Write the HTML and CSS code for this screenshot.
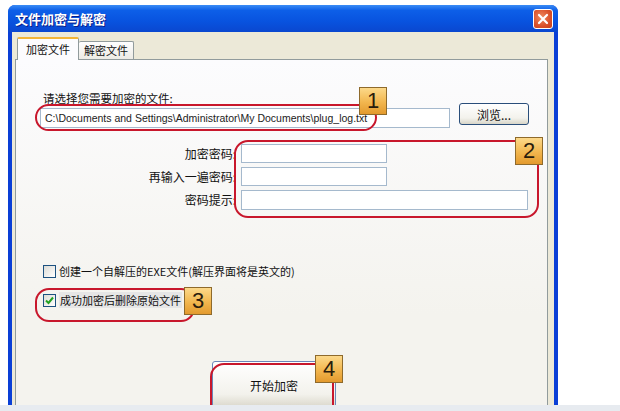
FILE: index.html
```html
<!DOCTYPE html>
<html lang="zh-CN">
<head>
  <meta charset="UTF-8">
  <title>文件加密与解密</title>
  <link rel="stylesheet" href="styles.css">
</head>
<body>
  <div class="screen">
    <div class="window">
      <div class="titlebar">
        <span class="title">文件加密与解密</span>
        <span class="close">
          <svg width="12" height="12" viewBox="0 0 12 12"><path d="M2 2 L10 10 M10 2 L2 10" stroke="#fff" stroke-width="2.2" stroke-linecap="round"/></svg>
        </span>
      </div>
      <div class="client">
        <div class="tabs">
          <div class="tab active">加密文件</div>
          <div class="tab">解密文件</div>
        </div>
        <div class="panel">
          <div class="file-label">请选择您需要加密的文件:</div>
          <div class="file-row">
            <div class="field path">C:\Documents and Settings\Administrator\My Documents\plug_log.txt</div>
            <div class="btn browse">浏览...</div>
          </div>

          <div class="pwd-grid">
            <label>加密密码:</label><div class="field short"></div>
            <label>再输入一遍密码:</label><div class="field short"></div>
            <label>密码提示:</label><div class="field long"></div>
          </div>

          <div class="check-row first">
            <span class="checkbox"></span>
            <span>创建一个自解压的EXE文件(解压界面将是英文的)</span>
          </div>
          <div class="check-row">
            <span class="checkbox checked">
              <svg width="9" height="9" viewBox="0 0 9 9"><path d="M1 4.5 L3.5 7 L8 1.5" fill="none" stroke="#21a121" stroke-width="2"/></svg>
            </span>
            <span class="focused">成功加密后删除原始文件</span>
          </div>

          <div class="btn start">开始加密</div>

          <!-- annotations -->
          <div class="mark m1"></div>
          <div class="mark m2"></div>
          <div class="mark m3"></div>
          <div class="mark m4"></div>
          <div class="num n1">1</div>
          <div class="num n2">2</div>
          <div class="num n3">3</div>
          <div class="num n4">4</div>
        </div>
      </div>
    </div>
  </div>
  <div class="strip"></div>
</body>
</html>
```

FILE: styles.css
```css
html, body {
  margin: 0;
  padding: 0;
  height: 411px;
  overflow: hidden;
  background: #fff;
}
body {
  display: flex;
  flex-direction: column;
  font-family: "Noto Sans CJK SC", "Liberation Sans", sans-serif;
  font-size: 12px;
  color: #111;
}
.screen {
  flex: 1;
  overflow: hidden;
}
.strip {
  height: 6px;
  background: #e7ebf0;
}
.window {
  margin: 5px 0 0 8px;
  width: 550px;
  height: 420px;
  background: #0a3fd6;
  border-radius: 7px 7px 0 0;
  display: flex;
  flex-direction: column;
}
.titlebar {
  height: 27px;
  border-radius: 7px 7px 0 0;
  background: linear-gradient(#3a8cf5 0%, #0d5fe8 20%, #0853df 60%, #0a47cf 100%);
  display: flex;
  align-items: center;
  justify-content: space-between;
  padding: 0 5px 0 7px;
}
.title {
  color: #fff;
  font-weight: bold;
  font-size: 13px;
  text-shadow: 1px 1px 0 #0a1e8a;
}
.close {
  width: 18px;
  height: 18px;
  border: 1px solid #fff;
  border-radius: 3px;
  background: radial-gradient(circle at 40% 40%, #ef8a5e, #d9502a 60%, #c4401d);
  display: flex;
  align-items: center;
  justify-content: center;
}
.client {
  flex: 1;
  margin: 0 4px;
  background: #ece9d8;
  padding: 5px 6px 0 3px;
  display: flex;
  flex-direction: column;
}
.tabs {
  display: flex;
  align-items: flex-end;
  padding-left: 2px;
  height: 22px;
  font-size: 11px;
}
.tab {
  height: 17px;
  padding: 0 5px;
  background: linear-gradient(#fefefe, #ecebe5);
  border: 1px solid #919b9c;
  border-bottom: none;
  border-left: none;
  border-radius: 2px 2px 0 0;
  line-height: 17px;
}
.tab.active {
  height: 21px;
  line-height: 20px;
  padding: 0 8px;
  background: #fcfcfe;
  border-left: 1px solid #919b9c;
  border-top: 2px solid #f3b538;
  margin-bottom: -1px;
  position: relative;
  z-index: 1;
}
.panel {
  flex: 1;
  position: relative;
  border: 1px solid #919b9c;
  background: linear-gradient(#fcfcfe, #f4f3ee 70%);
  padding: 31px 0 0 24px;
}
.file-label {
  line-height: 14px;
  padding-left: 3px;
  font-size: 11.5px;
}
.file-row {
  display: flex;
  align-items: flex-start;
  margin-top: 3px;
}
.field {
  height: 18px;
  background: #fff;
  border: 1px solid #a5b9cd;
  box-sizing: content-box;
}
.path {
  width: 404px;
  padding-left: 4px;
  font-family: "Liberation Sans", sans-serif;
  font-size: 10.5px;
  line-height: 18px;
  color: #222;
  white-space: nowrap;
  overflow: hidden;
}
.btn {
  border: 1px solid #2a4e7a;
  border-radius: 3px;
  background: linear-gradient(#ffffff, #f3f2ec 70%, #d8d5c8);
  display: flex;
  align-items: center;
  justify-content: center;
}
.browse {
  width: 68px;
  height: 20px;
  margin: -5px 0 0 9px;
}
.pwd-grid {
  display: grid;
  grid-template-columns: 196px 146px;
  grid-auto-rows: 17px;
  column-gap: 5px;
  row-gap: 6px;
  margin-top: 17px;
  align-items: center;
}
.pwd-grid label {
  text-align: right;
}
.pwd-grid .field {
  height: 17px;
}
.pwd-grid .long {
  width: 285px;
  height: 18px;
}
.check-row {
  display: flex;
  align-items: center;
  gap: 3px;
  height: 14px;
  margin-top: 15px;
  padding-left: 3px;
  font-size: 11px;
}
.check-row.first {
  margin-top: 56px;
}
.checkbox {
  width: 11px;
  height: 11px;
  border: 1px solid #1c5180;
  background: linear-gradient(135deg, #dcdbd5, #fff);
  display: flex;
  align-items: center;
  justify-content: center;
}
.focused {
  background: #e6e6e6;
  padding: 0 1px;
}
.start {
  width: 122px;
  height: 46px;
  margin: 54px 0 0 172px;
  border-color: #6a86b8;
}
.mark {
  position: absolute;
  border: 2px solid #c8172c;
  border-radius: 14px;
}
.m1 { left: 19px; top: 44px; width: 338px; height: 23px; }
.m2 { left: 218px; top: 80px; width: 301px; height: 74px; }
.m3 { left: 19px; top: 228px; width: 156px; height: 30px; }
.m4 { left: 194px; top: 303px; width: 120px; height: 70px; }
.num {
  position: absolute;
  width: 26px;
  height: 26px;
  border: 1px solid #8e6a2c;
  background: linear-gradient(#fcd98a, #f2b64e 55%, #e39a2e);
  font-family: "Liberation Sans", sans-serif;
  font-size: 22px;
  line-height: 26px;
  text-align: center;
  color: #2a1c0c;
}
.n1 { left: 343px; top: 27px; }
.n2 { left: 499px; top: 77px; }
.n3 { left: 168px; top: 227px; }
.n4 { left: 299px; top: 295px; }
```
